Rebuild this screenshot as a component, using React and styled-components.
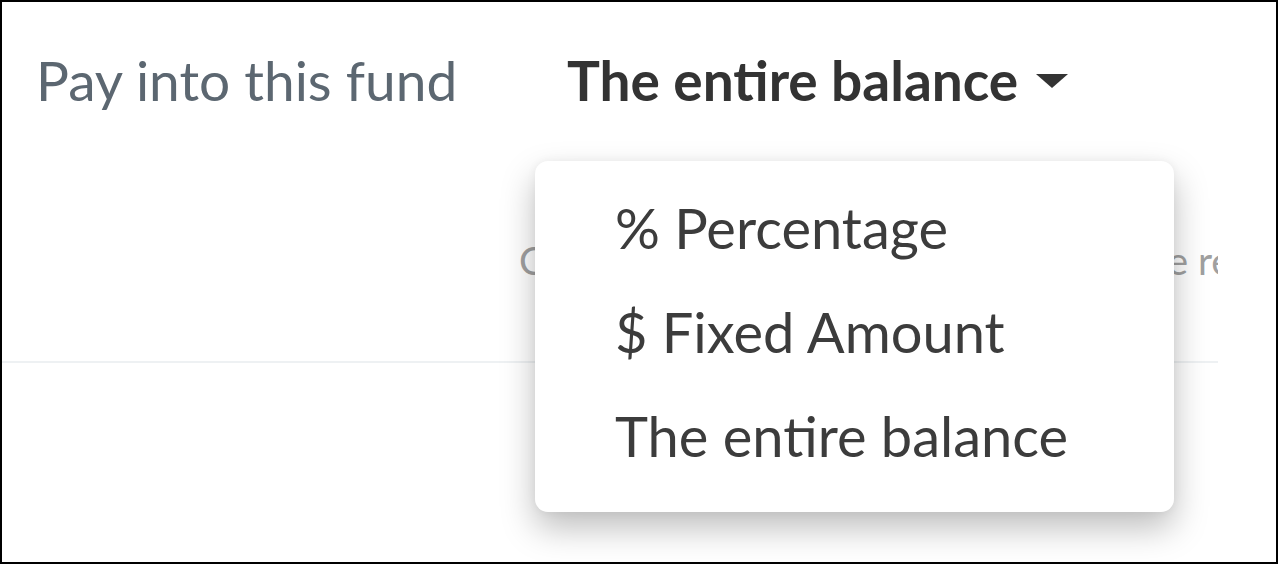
import React from 'react';
import styled, { createGlobalStyle } from 'styled-components';

const GlobalStyle = createGlobalStyle`
  html, body {
    margin: 0;
    padding: 0;
    background: #fff;
  }
  body {
    font-family: Lato, "Open Sans", "Liberation Sans", sans-serif;
  }
`;

const Frame = styled.div`
  width: 1278px;
  height: 564px;
  box-sizing: border-box;
  border: 2px solid #000;
  background: #fff;
  overflow: hidden;
`;

const Content = styled.div`
  width: 1216px;
  height: 100%;
  overflow: hidden;
  display: flex;
  flex-direction: column;
`;

const FieldRow = styled.div`
  display: flex;
  align-items: baseline;
  padding: 45px 0 0 34px;
  height: 66px;
  line-height: 66px;
`;

const Label = styled.div`
  width: 531px;
  font-size: 55px;
  font-weight: 400;
  color: #5c6771;
`;

const SelectWrap = styled.div`
  position: relative;
`;

const SelectButton = styled.button`
  display: flex;
  align-items: center;
  gap: 18px;
  border: none;
  background: transparent;
  padding: 0;
  font-family: inherit;
  font-size: 55px;
  line-height: 66px;
  font-weight: 700;
  color: #333;
  cursor: pointer;
`;

const Caret = styled.span`
  width: 0;
  height: 0;
  border-left: 16px solid transparent;
  border-right: 16px solid transparent;
  border-top: 14px solid #333;
  margin-top: 2px;
`;

const Hint = styled.div`
  padding: 124px 0 0 517px;
  height: 124px;
  font-size: 39px;
  line-height: 47px;
  color: #a0a0a0;
  white-space: nowrap;
`;

const Divider = styled.div`
  height: 2px;
  background: #eef1f3;
`;

const Menu = styled.ul`
  position: absolute;
  top: 114px;
  left: -32px;
  width: 639px;
  box-sizing: border-box;
  margin: 0;
  padding: 15px 0 24px;
  list-style: none;
  background: #fff;
  border-radius: 13px;
  box-shadow: 0 16px 34px rgba(0, 0, 0, 0.26), 0 0 10px rgba(0, 0, 0, 0.05);
  z-index: 10;
`;

const MenuItem = styled.li`
  padding: 0 0 0 80px;
  height: 104px;
  line-height: 104px;
  font-size: 56px;
  color: #3c3c3c;
  white-space: nowrap;
  cursor: pointer;
`;

const options = ['% Percentage', '$ Fixed Amount', 'The entire balance'];

export default function App() {
  return (
    <>
      <GlobalStyle />
      <Frame>
        <Content>
          <FieldRow>
            <Label>Pay into this fund</Label>
            <SelectWrap>
              <SelectButton>
                The entire balance
                <Caret />
              </SelectButton>
              <Menu>
                {options.map(o => (
                  <MenuItem key={o}>{o}</MenuItem>
                ))}
              </Menu>
            </SelectWrap>
          </FieldRow>
          <Hint>Choose how much of this balance, save remaining for later</Hint>
          <Divider />
        </Content>
      </Frame>
    </>
  );
}
